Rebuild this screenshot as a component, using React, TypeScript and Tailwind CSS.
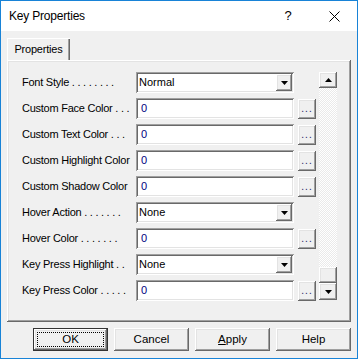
import React from "react";

const raised =
  "shadow-[inset_-1px_-1px_0_#696969,inset_1px_1px_0_#ffffff,inset_-2px_-2px_0_#a0a0a0,inset_2px_2px_0_#e3e3e3]";
const sunken =
  "shadow-[inset_1px_1px_0_#a0a0a0,inset_-1px_-1px_0_#ffffff,inset_2px_2px_0_#696969,inset_-2px_-2px_0_#e3e3e3]";

type Row = { label: string; kind: "select" | "color"; value: string };

const rows: Row[] = [
  { label: "Font Style . . . . . . . .", kind: "select", value: "Normal" },
  { label: "Custom Face Color . . .", kind: "color", value: "0" },
  { label: "Custom Text Color . . .", kind: "color", value: "0" },
  { label: "Custom Highlight Color", kind: "color", value: "0" },
  { label: "Custom Shadow Color", kind: "color", value: "0" },
  { label: "Hover Action . . . . . . .", kind: "select", value: "None" },
  { label: "Hover Color . . . . . . .", kind: "color", value: "0" },
  { label: "Key Press Highlight . .", kind: "select", value: "None" },
  { label: "Key Press Color . . . . .", kind: "color", value: "0" },
];

function Arrow({ up = false }: { up?: boolean }) {
  return (
    <svg width="7" height="4" viewBox="0 0 7 4" className={up ? "rotate-180" : ""}>
      <path d="M0 0h7L3.5 4z" fill="#000" />
    </svg>
  );
}

function Field({ row }: { row: Row }) {
  if (row.kind === "select") {
    return (
      <div className="flex items-center">
        <div className={`w-[158px] h-[21px] bg-white flex items-center pl-[3px] pr-[2px] ${sunken}`}>
          <span className="flex-1 text-black">{row.value}</span>
          <div className={`w-[16px] h-[17px] bg-[#f0f0f0] flex items-center justify-center ${raised}`}>
            <Arrow />
          </div>
        </div>
      </div>
    );
  }
  return (
    <div className="flex items-center gap-[4px]">
      <div className={`w-[158px] h-[21px] bg-white flex items-center pl-[5px] ${sunken}`}>
        <span className="text-[#000080]">{row.value}</span>
      </div>
      <div className={`w-[18px] h-[20px] bg-[#f0f0f0] flex items-end justify-center pb-[5px] ${raised}`}>
        <span className="text-[10px] leading-none tracking-[1px] text-[#202060]">...</span>
      </div>
    </div>
  );
}

function Button({ children, focus = false }: { children: React.ReactNode; focus?: boolean }) {
  return (
    <div className={`w-[75px] h-[23px] relative bg-[#f0f0f0] flex items-center justify-center ${focus ? "border border-[#333]" : ""}`}>
      <div className={`absolute inset-0 ${raised}`} />
      {focus && <div className="absolute inset-[3px] border border-dotted border-black" />}
      <span className="relative text-[11.5px]">{children}</span>
    </div>
  );
}

export default function App() {
  return (
    <div
      className="w-[358px] h-[359px] border border-[#1883d7] bg-[#f0f0f0] flex flex-col text-[11px] text-black"
      style={{ fontFamily: '"Liberation Sans", Arial, sans-serif' }}
    >
      <div className="h-[30px] bg-white flex items-center pl-[8px] shrink-0">
        <span className="flex-1 text-[12px] tracking-[-0.2px] text-black">
          Key Properties
        </span>
        <span className="w-[46px] text-center text-[13px]">?</span>
        <div className="w-[46px] flex justify-center">
          <svg width="11" height="11" viewBox="0 0 11 11">
            <path d="M0.5 0.5l10 10M10.5 0.5l-10 10" stroke="#000" strokeWidth="1" />
          </svg>
        </div>
      </div>

      <div className="flex-1 flex flex-col px-[6px] pt-[7px]">
        <div className="flex">
          <div className="h-[22px] w-[63px] flex items-center justify-center bg-[#f0f0f0] tracking-[-0.2px] shadow-[inset_1px_1px_0_#ffffff,inset_-1px_0_0_#696969,inset_-2px_0_0_#a0a0a0]">
            Properties
          </div>
        </div>
        <div className={`h-[262px] w-[344px] flex items-start pl-[15px] pt-[12px] ${raised}`}>
          <div className="flex flex-col gap-[5px] w-[297px]">
            {rows.map((r) => (
              <div key={r.label} className="flex items-center h-[21px]">
                <div className="w-[114px] whitespace-nowrap overflow-hidden tracking-[-0.25px]">{r.label}</div>
                <Field row={r} />
              </div>
            ))}
          </div>
          <div className="w-[18px] h-[228px] flex flex-col">
            <div className={`h-[16px] shrink-0 bg-[#f0f0f0] flex items-center justify-center ${raised}`}>
              <Arrow up />
            </div>
            <div className="h-[179px] shrink-0 bg-[conic-gradient(#ffffff_25%,#eaeaea_0_50%,#ffffff_0_75%,#eaeaea_0)] bg-[length:2px_2px]" />
            <div className={`h-[16px] shrink-0 bg-[#f0f0f0] ${raised}`} />
            <div className={`h-[17px] shrink-0 bg-[#f0f0f0] flex items-center justify-center ${raised}`}>
              <Arrow />
            </div>
          </div>
        </div>
        <div className="flex justify-end gap-[6px] pt-[6px]">
          <Button focus>OK</Button>
          <Button>Cancel</Button>
          <Button>
            <span className="underline">A</span>pply
          </Button>
          <Button>Help</Button>
        </div>
      </div>
    </div>
  );
}
